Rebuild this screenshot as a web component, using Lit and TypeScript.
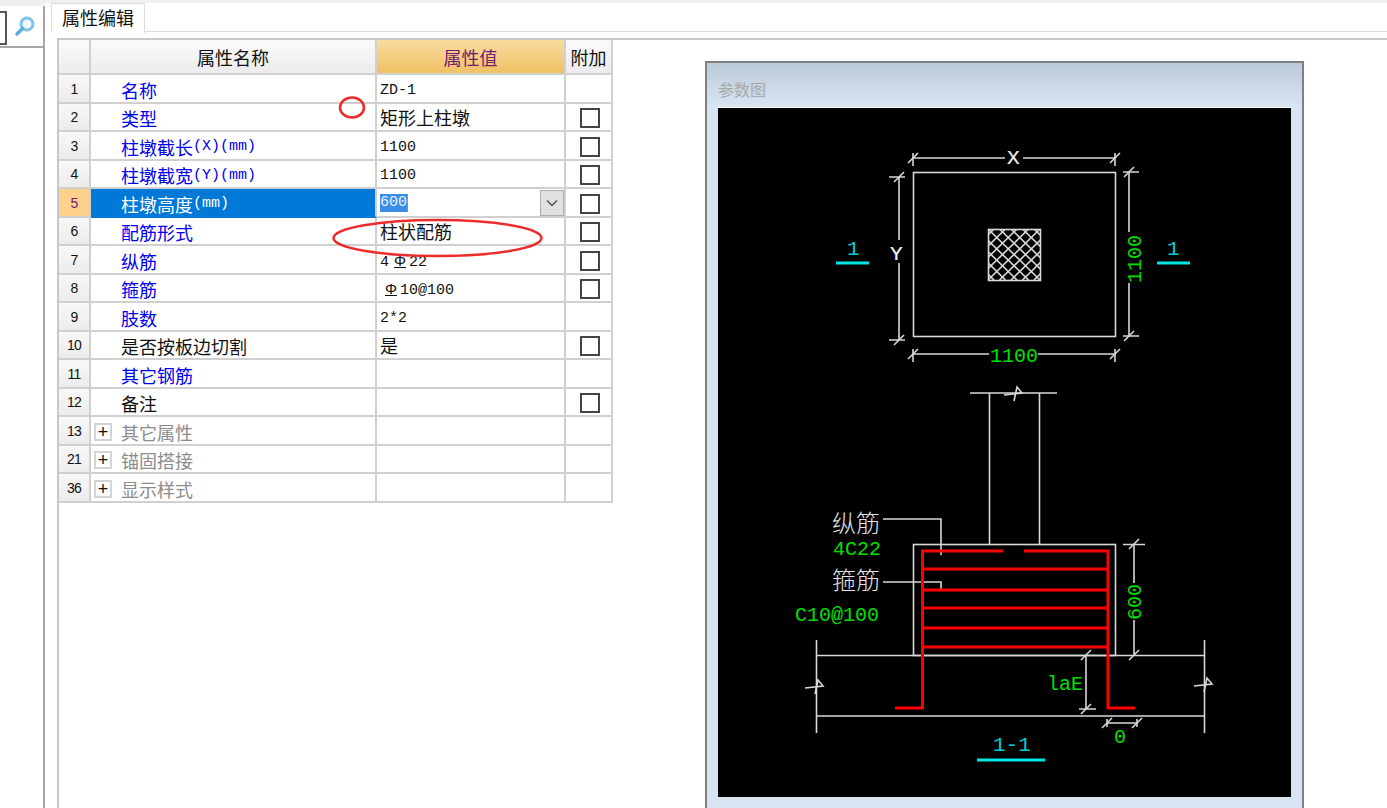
import { LitElement, css, html, svg } from "lit";
import { customElement } from "lit/decorators.js";

type Row = {
	no: string;
	name: string;
	unit?: string;
	kind?: "link" | "plain" | "group";
	value?: unknown;
	check?: boolean;
	selected?: boolean;
};

const rebar = html`<span class="rebar">Φ</span>`;

const rows: Row[] = [
	{ no: "1", name: "名称", kind: "link", value: html`<span class="latin">ZD-1</span>` },
	{ no: "2", name: "类型", kind: "link", value: "矩形上柱墩", check: true },
	{ no: "3", name: "柱墩截长", unit: "(X)(mm)", kind: "link", value: html`<span class="latin">1100</span>`, check: true },
	{ no: "4", name: "柱墩截宽", unit: "(Y)(mm)", kind: "link", value: html`<span class="latin">1100</span>`, check: true },
	{ no: "5", name: "柱墩高度", unit: "(mm)", selected: true, check: true },
	{ no: "6", name: "配筋形式", kind: "link", value: "柱状配筋", check: true },
	{ no: "7", name: "纵筋", kind: "link", value: html`<span class="latin">4${rebar}22</span>`, check: true },
	{ no: "8", name: "箍筋", kind: "link", value: html`<span class="latin">${rebar}10@100</span>`, check: true },
	{ no: "9", name: "肢数", kind: "link", value: html`<span class="latin">2*2</span>` },
	{ no: "10", name: "是否按板边切割", kind: "plain", value: "是", check: true },
	{ no: "11", name: "其它钢筋", kind: "link" },
	{ no: "12", name: "备注", kind: "plain", check: true },
	{ no: "13", name: "其它属性", kind: "group" },
	{ no: "21", name: "锚固搭接", kind: "group" },
	{ no: "36", name: "显示样式", kind: "group" },
];

// leader tick used on every dimension line
const tick = (x: number, y: number) => svg`<line x1=${x - 5} y1=${y + 5} x2=${x + 5} y2=${y - 5} />`;

// the break mark on cut edges
const cut = (x: number, y: number) => svg`<polyline points="${x - 10},${y + 1} ${x + 8},${y - 1} ${x + 3},${y - 7} ${x},${y + 7}" />`;

const hatch = () => {
	const lines = [];
	for (let i = -57.5; i < 52; i += 11.5) {
		lines.push(svg`<line x1=${988 + i} y1="229" x2=${988 + i + 52} y2="280" />`);
		lines.push(svg`<line x1=${988 + i} y1="280" x2=${988 + i + 52} y2="229" />`);
	}
	return lines;
};

@customElement("cad-diagram")
export class CadDiagram extends LitElement {
	static styles = css`
		:host {
			display: block;
		}
		svg {
			display: block;
			background: #000;
		}
		.white {
			stroke: #d8d8d8;
			stroke-width: 1.6;
			fill: none;
		}
		.red {
			stroke: #f00;
			stroke-width: 3;
			fill: none;
		}
		.cyan {
			stroke: #00e5e5;
			stroke-width: 3;
		}
		text {
			font-family: "Liberation Mono", monospace;
			font-size: 20px;
		}
		.g {
			fill: #00e000;
		}
		.c {
			fill: #00cfd8;
			font-size: 21px;
		}
		.w {
			fill: #f0f0f0;
			stroke: #f0f0f0;
			stroke-width: 0.2;
			font-size: 21px;
		}
		.cn {
			fill: #e4e4e4;
			font-family: "Noto Sans CJK SC", sans-serif;
			font-size: 24px;
			font-weight: 300;
		}
	`;

	render() {
		return html`<svg width="573" height="689" viewBox="718 108 573 689">
			<defs>
				<clipPath id="h"><rect x="988" y="229" width="52" height="51" /></clipPath>
			</defs>

			<g class="white">
				<rect x="913.5" y="172.5" width="202" height="164" />
				<rect x="988.5" y="229.5" width="52" height="51" />
				<g clip-path="url(#h)">${hatch()}</g>

				<path d="M913 158H1005M1023 158H1115M913 153V166M1115 153V166" />
				${tick(913, 158)} ${tick(1115, 158)}
				<path d="M899 177V240M899 263V340M889 177H905M889 340H905" />
				${tick(899, 177)} ${tick(899, 340)}
				<path d="M1129 172V232M1129 283V336M1123 172H1139M1123 336H1139" />
				${tick(1129, 172)} ${tick(1129, 336)}
				<path d="M913 354H989M1038 354H1115M913 349V362M1115 349V362" />
				${tick(913, 354)} ${tick(1115, 354)}

				<path d="M970 393H1057M989.5 393V544M1039.5 393V544" />
				${cut(1014, 394)}
				<rect x="913.5" y="544.5" width="202" height="111" />
				<path d="M816 655.5H1204M816 716H1204M816.5 640V733M1204.5 640V733" />
				${cut(815, 687)} ${cut(1204, 685)}

				<path d="M883 519H941V555M883 582H941V590" />

				<path d="M1134 544V583M1134 620V655M1123 544.5H1145" />
				${tick(1134, 544)} ${tick(1134, 655)}
				<path d="M1086 655V709M1079 709H1096" />
				${tick(1086, 655)} ${tick(1086, 709)}
				<path d="M1107 723H1137M1107 719V727M1137 719V727" />
				${tick(1107, 723)} ${tick(1137, 723)}
			</g>

			<g class="red">
				<path d="M1003 551H922.5V708H895" />
				<path d="M1024 551H1108V708H1135" />
				<path d="M922 569H1108M922 590H1108M922 608H1108M922 628H1108M922 647H1108" />
			</g>

			<line class="cyan" x1="836" y1="263" x2="869" y2="263" />
			<line class="cyan" x1="1157" y1="263" x2="1190" y2="263" />
			<line class="cyan" x1="977" y1="760" x2="1045" y2="760" />

			<text class="w" x="1007" y="164">X</text>
			<text class="w" x="890" y="260">Y</text>
			<text class="g" x="990" y="362">1100</text>
			<text class="g" x="833" y="555">4C22</text>
			<text class="g" x="795" y="621">C10@100</text>
			<text class="g" x="1047" y="690">laE</text>
			<text class="g" x="1114" y="743">0</text>
			<text class="g" transform="translate(1141 283) rotate(-90)">1100</text>
			<text class="g" transform="translate(1141 620) rotate(-90)">600</text>
			<text class="c" x="847" y="255">1</text>
			<text class="c" x="1167" y="255">1</text>
			<text class="c" x="993" y="751">1-1</text>
			<text class="cn" x="832" y="532">纵筋</text>
			<text class="cn" x="832" y="589">箍筋</text>
		</svg>`;
	}
}

@customElement("app-root")
export class AppRoot extends LitElement {
	static styles = css`
		:host {
			display: block;
			width: 1387px;
			height: 808px;
			overflow: hidden;
			font-family: "Noto Sans CJK SC", sans-serif;
			color: #111;
		}
		.page {
			display: flex;
			height: 808px;
			background: #f0f0f0;
		}

		/* left strip with the search box */
		aside {
			width: 43px;
			flex: none;
			margin-top: 6px;
			background: #fff;
			border-right: 2px solid #a6a6a6;
		}
		.search {
			display: flex;
			align-items: center;
			justify-content: space-between;
			height: 40px;
			border-bottom: 2px solid #a6a6a6;
			padding-right: 7px;
		}
		.search .box {
			width: 7px;
			height: 34px;
			margin-top: 3px;
			box-sizing: border-box;
			border: 2px solid #555;
			border-left: none;
			background: #fff;
		}

		main {
			flex: 1;
			display: flex;
			flex-direction: column;
			min-width: 0;
			margin-top: 3px;
			background: #fff;
			padding-left: 6px;
		}
		.tabs {
			height: 29px;
			box-sizing: border-box;
			border-bottom: 1px solid #dcdcdc;
			display: flex;
		}
		.tab {
			width: 94px;
			height: 30px;
			box-sizing: border-box;
			border: 1px solid #dcdcdc;
			border-bottom: none;
			background: #fff;
			font-size: 18px;
			line-height: 26px;
			text-align: center;
		}
		.body {
			flex: 1;
			display: flex;
			padding-left: 6px;
			padding-top: 6px;
			min-height: 0;
		}
		.body-frame {
			flex: 1;
			border-left: 2px solid #c8c8c8;
			border-top: 2px solid #c8c8c8;
			display: flex;
			align-items: flex-start;
			gap: 92px;
			min-height: 0;
		}

		.grid {
			display: grid;
			grid-template-columns: 32px 286px 189px 47px;
			grid-template-rows: 35px repeat(15, 28.53px);
			flex: none;
		}
		.cell {
			box-sizing: border-box;
			border-right: 2px solid #d0d0d0;
			border-bottom: 2px solid #d0d0d0;
			padding-top: 1px;
			display: flex;
			align-items: center;
			font-size: 18px;
			white-space: nowrap;
			overflow: hidden;
		}
		.head {
			justify-content: center;
			background: linear-gradient(#fafafa, #ececec);
		}
		.head.value {
			background: linear-gradient(#f8dca0, #f0c064);
			color: #702070;
		}
		.no {
			justify-content: center;
			background: linear-gradient(#f8f8f8, #ececec);
			font: 14px "Liberation Sans", sans-serif;
			letter-spacing: -0.8px;
		}
		.no.on {
			background: #fdd08c;
			color: #702070;
		}
		.name {
			padding-left: 30px;
			padding-top: 3px;
		}
		.name.link {
			color: #0000f0;
		}
		.name.group {
			padding-left: 3px;
			color: #8c8c8c;
		}
		.name.on {
			background: #0078d7;
			color: #fff;
			border-bottom-color: #0078d7;
		}
		.unit {
			font: 15px "Liberation Mono", monospace;
		}
		.plus {
			width: 18px;
			height: 18px;
			margin-right: 9px;
			box-sizing: border-box;
			border: 2px solid #d4d4d4;
			color: #111;
			display: flex;
			align-items: center;
			justify-content: center;
			font: 18px/1 "Liberation Sans", sans-serif;
		}
		.val {
			padding-left: 3px;
		}
		.latin {
			display: inline-block;
			margin-top: 3px;
			font: 15px "Liberation Mono", monospace;
		}
		.rebar {
			display: inline-block;
			width: 16px;
			margin: 0 1px 0 3px;
			text-align: center;
			font: 15px "Liberation Sans", sans-serif;
			text-decoration: underline;
		}
		.editor {
			justify-content: space-between;
			padding-right: 0;
		}
		.editor .sel {
			background: #3a8ee6;
			color: #e8f2ff;
			font: 15px/18px "Liberation Mono", monospace;
			border-right: 1px solid #e08020;
		}
		.drop {
			width: 24px;
			height: 26px;
			box-sizing: border-box;
			background: #e1e1e1;
			border: 1px solid #adadad;
			display: flex;
			align-items: center;
			justify-content: center;
		}
		.extra {
			justify-content: center;
			padding-left: 2px;
			padding-top: 3px;
		}
		.check {
			width: 20px;
			height: 20px;
			box-sizing: border-box;
			border: 2px solid #444;
			background: #fff;
		}

		/* parameter picture window */
		.window {
			flex: none;
			box-sizing: border-box;
			width: 599px;
			height: 760px;
			margin-top: 21px;
			border: 2px solid #808080;
			background: #d8e4f1;
			padding: 0 10px 0 11px;
		}
		.window h3 {
			margin: 0 -10px 0 -11px;
			padding-left: 11px;
			height: 44px;
			box-sizing: border-box;
			background: linear-gradient(#bccbd8, #d8e4f1);
			color: #a8a8a8;
			font-size: 16px;
			font-weight: 400;
			line-height: 52px;
		}
		.window cad-diagram {
			border-top: 1px solid #fff;
		}

		/* the hand-drawn red rings lie over the grid */
		.rings {
			position: absolute;
			left: 0;
			top: 0;
			pointer-events: none;
		}
	`;

	private renderRow(r: Row) {
		const group = r.kind === "group";
		return html`
			<div class="cell no ${r.selected ? "on" : ""}">${r.no}</div>
			<div class="cell name ${r.kind ?? ""} ${r.selected ? "on" : ""}">
				${group ? html`<span class="plus">+</span>` : ""}${r.name}${r.unit ? html`<span class="unit">${r.unit}</span>` : ""}
			</div>
			${r.selected
				? html`<div class="cell val editor">
						<span class="sel">600</span>
						<span class="drop">
							<svg width="12" height="8" viewBox="0 0 12 8"><path d="M1 1.5L6 6.5L11 1.5" fill="none" stroke="#555" stroke-width="1.5" /></svg>
						</span>
					</div>`
				: html`<div class="cell val">${r.value ?? ""}</div>`}
			<div class="cell extra">${r.check ? html`<span class="check"></span>` : ""}</div>
		`;
	}

	render() {
		return html`<div class="page">
			<aside>
				<div class="search">
					<span class="box"></span>
					<svg width="22" height="22" viewBox="0 0 22 22">
						<circle cx="13" cy="9" r="6" fill="#f0f8fd" stroke="#7cc2ea" stroke-width="3" />
						<path d="M8.5 13.5L3 19" stroke="#5aaee0" stroke-width="3.5" stroke-linecap="round" />
					</svg>
				</div>
			</aside>
			<main>
				<div class="tabs"><div class="tab">属性编辑</div></div>
				<div class="body">
					<div class="body-frame">
						<div class="grid">
							<div class="cell head"></div>
							<div class="cell head">属性名称</div>
							<div class="cell head value">属性值</div>
							<div class="cell head">附加</div>
							${rows.map((r) => this.renderRow(r))}
						</div>
						<section class="window">
							<h3>参数图</h3>
							<cad-diagram></cad-diagram>
						</section>
					</div>
				</div>
			</main>
			<svg class="rings" width="1387" height="808" fill="none" stroke="#ee2b2b" stroke-width="2.5">
				<ellipse cx="352" cy="107.5" rx="12" ry="10" />
				<ellipse cx="437.5" cy="238" rx="104" ry="18" />
			</svg>
		</div>`;
	}
}
